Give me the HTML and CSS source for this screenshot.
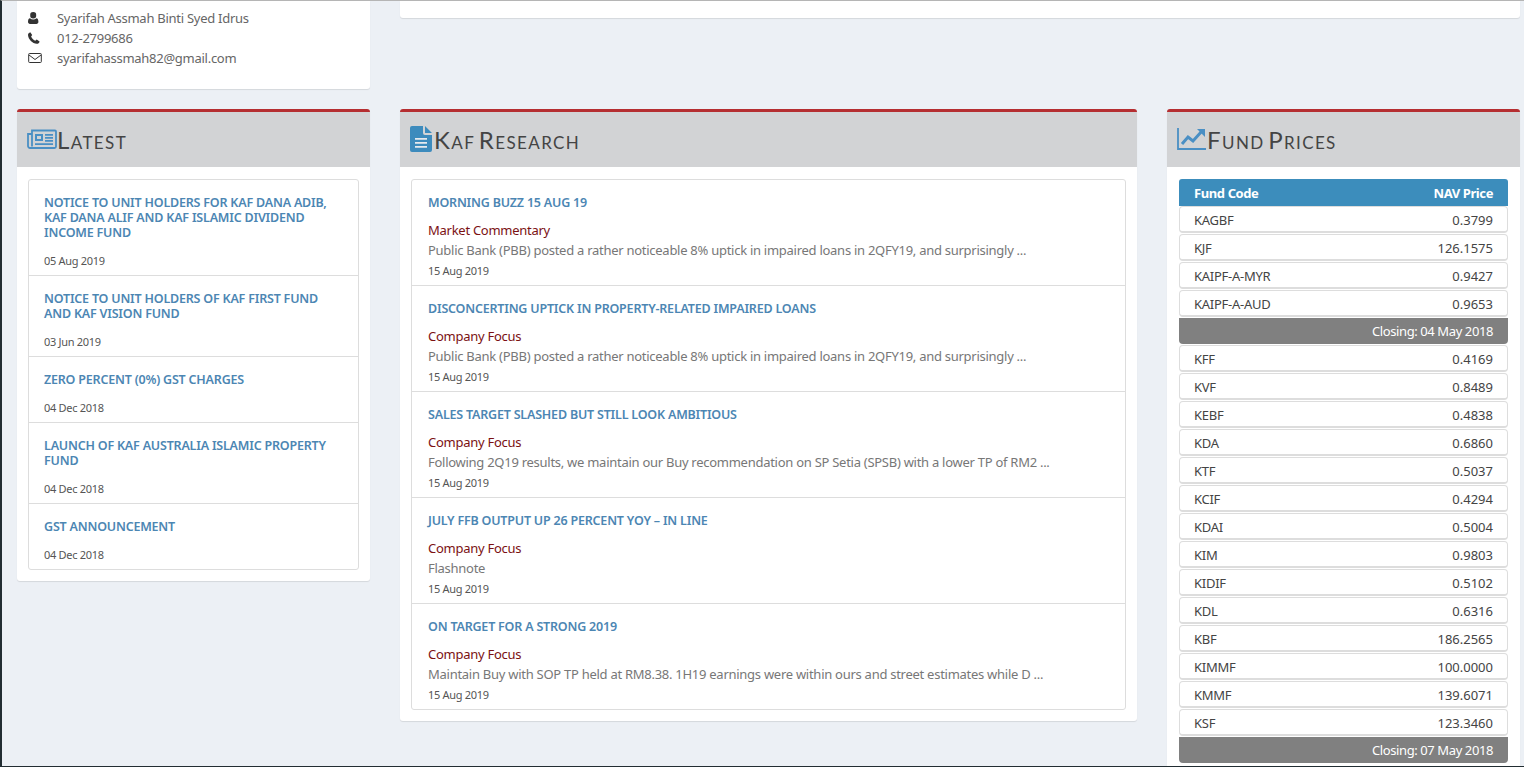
FILE: index.html
```html
<!DOCTYPE html>
<html lang="en">
<head>
	<meta charset="UTF-8">
	<title>Dashboard</title>
	<link rel="stylesheet" href="styles.css">
</head>
<body>
	<div class="page">
		<div class="top_row">
			<div class="card contact">
				<div class="contact_row">
					<svg class="contact_icon" viewBox="1.8 0 14 14"><path d="M7 1a3 3 0 0 1 3 3.200A3 3 0 0 1 7 7.400A3 3 0 0 1 4 4.200A3 3 0 0 1 7 1zM3.800 7.300C4.700 8.100 5.800 8.500 7 8.500s2.300-.4 3.200-1.200c1.400.2 2 1.500 2 3.500 0 1.300-.8 2.200-2 2.200H3.800c-1.200 0-2-.9-2-2.200 0-2 .6-3.300 2-3.500z" fill="#333"/></svg>
					<span>Syarifah Assmah Binti Syed Idrus</span>
				</div>
				<div class="contact_row">
					<svg class="contact_icon" viewBox="1 0 14 14"><path d="M3.300 1.200 5.200 4 4.100 5.500c.7 1.700 2.300 3.300 4.100 4.200L9.700 8.500l2.900 1.900c-.3 1.400-1.400 2.400-2.800 2.400C5.500 12.500 1.200 8.300 1 4c0-1.300 1-2.400 2.300-2.800z" fill="#333"/></svg>
					<span>012-2799686</span>
				</div>
				<div class="contact_row">
					<svg class="contact_icon" viewBox="0 0 14 14"><path d="M1.500 2.500h11a.8.8 0 0 1 .8.800v7.400a.8.800 0 0 1-.8.800h-11a.8.8 0 0 1-.8-.8V3.300a.8.800 0 0 1 .8-.8zM1 4l6 4.500L13 4" fill="none" stroke="#333"/></svg>
					<span>syarifahassmah82@gmail.com</span>
				</div>
			</div>
			<div class="card top_blank"></div>
		</div>

		<div class="columns">
			<div class="card panel">
				<div class="panel_head">
					<svg class="head_icon news_icon" viewBox="0 0 30 20"><path d="M5 1.500h23a1 1 0 0 1 1 1v15a1.500 1.500 0 0 1-1.500 1.500H3a2 2 0 0 1-2-2V5h4zM5 5v12.500" fill="none" stroke="#4a8fc4" stroke-width="1.800"/><path d="M8 5h8v7H8zM18 5h8v1.700h-8zM18 8h8v1.700h-8zM18 11h8v1.700h-8zM8 14.300h18V16H8z" fill="#4a8fc4"/><path d="M10 7h4v3h-4z" fill="#d2d3d5"/></svg>
					<h3>Latest</h3>
				</div>
				<div class="panel_body">
					<ul class="list">
						<li class="news_item">
							<a>Notice to Unit Holders for KAF Dana Adib, KAF Dana Alif and KAF Islamic Dividend Income Fund</a>
							<small>05 Aug 2019</small>
						</li>
						<li class="news_item">
							<a>Notice to Unit Holders of KAF First Fund and KAF Vision Fund</a>
							<small>03 Jun 2019</small>
						</li>
						<li class="news_item">
							<a>Zero Percent (0%) GST Charges</a>
							<small>04 Dec 2018</small>
						</li>
						<li class="news_item">
							<a>Launch of KAF Australia Islamic Property Fund</a>
							<small>04 Dec 2018</small>
						</li>
						<li class="news_item">
							<a>GST Announcement</a>
							<small>04 Dec 2018</small>
						</li>
					</ul>
				</div>
			</div>

			<div class="card panel">
				<div class="panel_head">
					<svg class="head_icon file_icon" viewBox="0 0 22 26"><path d="M2 0h11v7a2 2 0 0 0 2 2h7v15a2 2 0 0 1-2 2H2a2 2 0 0 1-2-2V2a2 2 0 0 1 2-2zM15 0l7 7h-7z" fill="#3d8bbd"/><path d="M5 12h12v1.800H5zM5 16h12v1.800H5zM5 20h12v1.800H5z" fill="#e6eaee"/></svg>
					<h3>Kaf Research</h3>
				</div>
				<div class="panel_body">
					<ul class="list">
						<li class="research_item">
							<a>Morning Buzz 15 Aug 19</a>
							<p class="category">Market Commentary</p>
							<p class="summary">Public Bank (PBB) posted a rather noticeable 8% uptick in impaired loans in 2QFY19, and surprisingly ...</p>
							<small>15 Aug 2019</small>
						</li>
						<li class="research_item">
							<a>Disconcerting Uptick in Property-Related Impaired Loans</a>
							<p class="category">Company Focus</p>
							<p class="summary">Public Bank (PBB) posted a rather noticeable 8% uptick in impaired loans in 2QFY19, and surprisingly ...</p>
							<small>15 Aug 2019</small>
						</li>
						<li class="research_item">
							<a>Sales Target Slashed but Still Look Ambitious</a>
							<p class="category">Company Focus</p>
							<p class="summary">Following 2Q19 results, we maintain our Buy recommendation on SP Setia (SPSB) with a lower TP of RM2 ...</p>
							<small>15 Aug 2019</small>
						</li>
						<li class="research_item">
							<a>July FFB Output up 26 Percent YoY – In Line</a>
							<p class="category">Company Focus</p>
							<p class="summary">Flashnote</p>
							<small>15 Aug 2019</small>
						</li>
						<li class="research_item">
							<a>On Target for a Strong 2019</a>
							<p class="category">Company Focus</p>
							<p class="summary">Maintain Buy with SOP TP held at RM8.38. 1H19 earnings were within ours and street estimates while D ...</p>
							<small>15 Aug 2019</small>
						</li>
					</ul>
				</div>
			</div>

			<div class="card panel">
				<div class="panel_head">
					<svg class="head_icon chart_icon" viewBox="0 0 30 24"><path d="M1 1v21h28" fill="none" stroke="#4a8fc4" stroke-width="1.800"/><path d="M5 17l6-7 5 4 9-10" fill="none" stroke="#4a8fc4" stroke-width="3"/><path d="M20 2h8v8z" fill="#4a8fc4"/></svg>
					<h3>Fund Prices</h3>
				</div>
				<div class="panel_body">
					<div class="price_table">
						<div class="price_head"><span>Fund Code</span><span>NAV Price</span></div>
						<div class="price_row"><span>KAGBF</span><span>0.3799</span></div>
						<div class="price_row"><span>KJF</span><span>126.1575</span></div>
						<div class="price_row"><span>KAIPF-A-MYR</span><span>0.9427</span></div>
						<div class="price_row"><span>KAIPF-A-AUD</span><span>0.9653</span></div>
						<div class="price_close">Closing: 04 May 2018</div>
						<div class="price_row"><span>KFF</span><span>0.4169</span></div>
						<div class="price_row"><span>KVF</span><span>0.8489</span></div>
						<div class="price_row"><span>KEBF</span><span>0.4838</span></div>
						<div class="price_row"><span>KDA</span><span>0.6860</span></div>
						<div class="price_row"><span>KTF</span><span>0.5037</span></div>
						<div class="price_row"><span>KCIF</span><span>0.4294</span></div>
						<div class="price_row"><span>KDAI</span><span>0.5004</span></div>
						<div class="price_row"><span>KIM</span><span>0.9803</span></div>
						<div class="price_row"><span>KIDIF</span><span>0.5102</span></div>
						<div class="price_row"><span>KDL</span><span>0.6316</span></div>
						<div class="price_row"><span>KBF</span><span>186.2565</span></div>
						<div class="price_row"><span>KIMMF</span><span>100.0000</span></div>
						<div class="price_row"><span>KMMF</span><span>139.6071</span></div>
						<div class="price_row"><span>KSF</span><span>123.3460</span></div>
						<div class="price_close">Closing: 07 May 2018</div>
					</div>
				</div>
			</div>
		</div>
	</div>
</body>
</html>
```

FILE: styles.css
```css
*{
	box-sizing:border-box;
	margin:0;
	padding:0;
}

ul{
	list-style-type:none;
}

html,body{
	height:100%;
	overflow:hidden;
}

body{
	background-color:#ecf0f5;
	color:#333;
	font-family:"Noto Sans","Liberation Sans",sans-serif;
	font-size:13px;
	letter-spacing:-0.27px;
}

.page{
	height:767px;
	overflow:hidden;
	background-color:#ecf0f5;
	border-left:2px solid #222d32;
	border-top:1px solid #b5b5b5;
	border-bottom:1px solid #222d32;
	padding:0 4px 0 15px;
}

.card{
	background-color:#fff;
	border-radius:3px;
	box-shadow:0 1px 1px rgba(0,0,0,0.1);
}

.top_row{
	display:flex;
	align-items:flex-start;
	gap:30px;
	height:88px;
}

.contact{
	flex:0 0 353px;
	height:88px;
	padding:7px 0 0 11px;
	border-radius:0 0 3px 3px;
}

.contact_row{
	display:flex;
	align-items:center;
	height:20px;
	color:#666;
}

.contact_icon{
	width:14px;
	height:14px;
	margin-right:15px;
}

.top_blank{
	flex:1;
	height:17px;
	border-radius:0 0 3px 3px;
}

.columns{
	display:grid;
	grid-template-columns:353px 737px 353px;
	gap:30px;
	align-items:start;
	margin-top:20px;
}

.panel{
	border-top:3px solid #b52e31;
}

.panel_head{
	display:flex;
	align-items:center;
	height:55px;
	padding-left:10px;
	background-color:#d2d3d5;
}

.panel_head h3{
	font-family:"Lato","Liberation Sans",sans-serif;
	font-size:24px;
	font-weight:400;
	font-variant:small-caps;
	letter-spacing:1.4px;
	word-spacing:-4px;
	color:#444;
	line-height:1;
	padding-top:1px;
}

.head_icon{
	flex:none;
	margin-top:-2px;
}

.news_icon{
	width:30px;
	height:20px;
}

.file_icon{
	width:22px;
	height:26px;
	margin-right:2px;
}

.chart_icon{
	width:30px;
	height:24px;
}

.panel_body{
	padding:12px 11px 11px;
}

.list{
	border:1px solid #ddd;
	border-radius:3px;
}

.news_item,.research_item{
	padding:15px 15px 6px;
	border-bottom:1px solid #ddd;
}

.research_item{
	padding-left:16px;
}

.news_item:last-child,.research_item:last-child{
	border-bottom:0;
}

.list a{
	display:block;
	font-size:12.500px;
	line-height:15px;
	font-weight:600;
	letter-spacing:-0.2px;
	text-transform:uppercase;
	color:#4c86b3;
}

.list small{
	display:block;
	font-size:11px;
	line-height:16px;
	letter-spacing:-0.3px;
	color:#555;
}

.news_item small{
	margin-top:13px;
}

.category{
	margin-top:10px;
	line-height:20px;
	color:#7b1113;
}

.summary{
	line-height:20px;
	color:#777;
	white-space:nowrap;
}

.research_item small{
	margin-top:3px;
}

.price_table{
	margin:0 1px;
	overflow:hidden;
	border-radius:3px;
}

.price_head,.price_row{
	display:flex;
	justify-content:space-between;
	align-items:center;
	padding:0 15px;
}

.price_head{
	height:27px;
	background-color:#3c8dbc;
	color:#fff;
	font-weight:700;
	letter-spacing:-0.4px;
}

.price_row{
	height:27px;
	margin-bottom:1px;
	padding:1px 14px 0;
	background-color:#fff;
	border:1px solid #ddd;
	border-bottom-width:2px;
	border-radius:4px;
	color:#444;
}

.price_row span:last-child{
	letter-spacing:0;
}

.price_close{
	height:26px;
	margin-bottom:1px;
	padding:0 15px;
	background-color:#808080;
	border-radius:0 0 4px 4px;
	color:#fff;
	line-height:26px;
	letter-spacing:-0.4px;
	text-align:right;
}
```
